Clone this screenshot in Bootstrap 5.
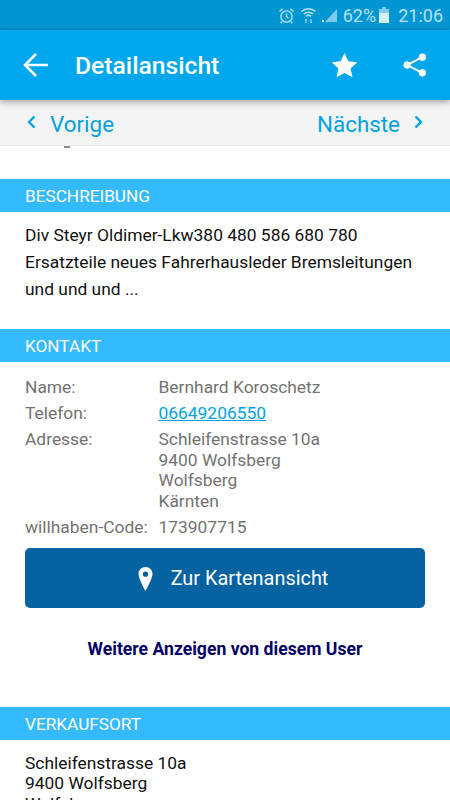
<!DOCTYPE html>
<html lang="de">
<head>
  <meta charset="UTF-8">
  <meta name="viewport" content="width=device-width, initial-scale=1.0">
  <title>Detailansicht</title>
  <link href="https://cdn.jsdelivr.net/npm/bootstrap@5.3.0/dist/css/bootstrap.min.css" rel="stylesheet">
  <style>
    html, body { height: 800px; overflow: hidden; }
    body { font-family: Roboto, "Liberation Sans", sans-serif; background: #fff; color: #111; }
    .status-bar { height: 30px; background: #0095d3; color: #b5e2f6; font-size: 18px; padding-right: 7px; gap: 5px; }
    .battery-icon { margin-left: -2px; }
    .app-bar { height: 70px; background: #00a7ec; color: #fff; padding: 0 23px; position: relative; z-index: 2; box-shadow: 0 2px 7px rgba(0,0,0,.35); }
    .app-title { font-size: 24.7px; font-weight: 500; margin-left: 27px; padding-top: 2px; }
    .star-icon { margin-right: 45px; }
    .pager { height: 46px; background: #f4f4f4; color: #00a2e4; font-size: 22.4px; padding: 5px 27px 0; border-bottom: 1px solid #ececec; }
    .pager svg { margin-top: -5px; }
    .pager-side { gap: 14px; }
    .page-body { height: 654px; overflow: hidden; }
    .cut-text { height: 33px; }
    .cut-mark { width: 6px; height: 2px; margin-left: 64px; background: #8a8a8a; }
    .section-head { height: 33px; background: #33baff; color: #fff; font-size: 17.2px; padding: 0 25px; line-height: 35px; }
    .descr { font-size: 17.4px; line-height: 27px; padding: 10px 25px 26px; margin: 0; }
    .contact { padding: 15px 25px 0; color: #727272; font-size: 17.4px; line-height: 20.5px; }
    .contact-row { display: flex; margin-bottom: 5.7px; }
    .contact-label { width: 133.5px; flex: none; }
    .contact a { color: #00a2e4; }
    .map-btn { height: 60px; background: #0563a2; color: #fff; font-size: 19.9px; border-radius: 5px; margin-top: 10px; padding: 3px 0 0 16px; gap: 18px; width: 100%; border: 0; }
    .more-link { color: #000066; font-size: 17.6px; font-weight: 700; text-align: center; margin-top: 31px; height: 68px; }
    .place { font-size: 17.4px; line-height: 20.5px; padding: 13px 25px 0; margin: 0; }
  </style>
</head>
<body>
  <div class="status-bar d-flex align-items-center justify-content-end">
    <svg width="17" height="17" viewBox="0 0 17 17" fill="none" stroke="#b5e2f6" stroke-width="1.4"><circle cx="8.5" cy="9.5" r="5.6"/><path d="M8.5 6.5v3.2l2 1.2M1.5 4.5l3-2.6M15.5 4.5l-3-2.6M4.2 14.5l-1.5 1.7M12.8 14.5l1.5 1.7"/></svg>
    <svg width="17" height="18" viewBox="0 0 17 18" fill="none" stroke="#b5e2f6" stroke-width="1.5"><path d="M1.5 5.5c4-3.6 10-3.6 14 0M3.8 8c2.7-2.4 6.7-2.4 9.4 0M6 10.4c1.4-1.2 3.6-1.2 5 0"/><path d="M6 17v-4M4.8 14.2 6 13l1.2 1.2M11 13v4M9.8 15.8 11 17l1.2-1.2" stroke-width="1"/></svg>
    <svg width="16" height="16" viewBox="0 0 16 16"><path d="M15 2v13H3z" fill="#7fcbec"/><rect x="0" y="13" width="2" height="2" fill="#e6f6fd"/></svg>
    <span>62%</span>
    <svg class="battery-icon" width="10" height="16" viewBox="0 0 10 16"><path d="M3 0h4v2h3v14H0V2h3z" fill="#7fcbec"/><rect y="6" width="10" height="10" fill="#d5effa"/></svg>
    <span class="ms-1">21:06</span>
  </div>

  <div class="app-bar d-flex align-items-center">
    <svg width="25" height="24" viewBox="0 0 25 24" fill="none" stroke="#fff" stroke-width="2.6"><path d="M25 12H2M13 1 2 12l11 11"/></svg>
    <div class="app-title flex-grow-1">Detailansicht</div>
    <svg class="star-icon" width="27" height="26" viewBox="0 0 24 23" fill="#fff"><path d="M12 .8l3.4 7.4 8 .9-6 5.4 1.7 7.9L12 18.5l-7.1 3.9 1.7-7.9-6-5.4 8-.9z"/></svg>
    <svg width="24" height="26" viewBox="0 0 26 27" fill="#fff" stroke="#fff"><circle cx="21" cy="5" r="3.6"/><circle cx="4.5" cy="13.5" r="3.6"/><circle cx="21" cy="22" r="3.6"/><path d="M21 5 4.5 13.5 21 22" fill="none" stroke-width="2"/></svg>
  </div>

  <div class="pager d-flex align-items-center justify-content-between">
    <div class="pager-side d-flex align-items-center">
      <svg width="9" height="14" viewBox="0 0 9 14" fill="none" stroke="#00a2e4" stroke-width="2.4"><path d="M7.5 1.5 2 7l5.5 5.5"/></svg>
      <span>Vorige</span>
    </div>
    <div class="pager-side d-flex align-items-center">
      <span>Nächste</span>
      <svg width="9" height="14" viewBox="0 0 9 14" fill="none" stroke="#00a2e4" stroke-width="2.4"><path d="M1.5 1.5 7 7l-5.5 5.5"/></svg>
    </div>
  </div>

  <div class="page-body">
    <div class="cut-text"><div class="cut-mark"></div></div>
    <div class="section-head">BESCHREIBUNG</div>
    <p class="descr">Div Steyr Oldimer-Lkw380 480 586 680 780<br>Ersatzteile neues Fahrerhausleder Bremsleitungen und und und ...</p>

    <div class="section-head">KONTAKT</div>
    <div class="contact">
      <div class="contact-row"><div class="contact-label">Name:</div><div>Bernhard Koroschetz</div></div>
      <div class="contact-row"><div class="contact-label">Telefon:</div><div><a href="#">06649206550</a></div></div>
      <div class="contact-row"><div class="contact-label">Adresse:</div><div>Schleifenstrasse 10a<br>9400 Wolfsberg<br>Wolfsberg<br>Kärnten</div></div>
      <div class="contact-row"><div class="contact-label">willhaben-Code:</div><div>173907715</div></div>
      <button type="button" class="map-btn d-flex align-items-center justify-content-center">
        <svg width="15" height="24" viewBox="0 0 15 24"><path fill="#fff" fill-rule="evenodd" d="M7.5 0C3.4 0 .5 3.1.5 7c0 4.7 7 17 7 17s7-12.300 7-17c0-3.900-2.900-7-7-7zm0 4.600a2.600 2.600 0 1 1 0 5.200 2.600 2.600 0 0 1 0-5.200z"/></svg>
        <span>Zur Kartenansicht</span>
      </button>
      <div class="more-link">Weitere Anzeigen von diesem User</div>
    </div>

    <div class="section-head">VERKAUFSORT</div>
    <p class="place">Schleifenstrasse 10a<br>9400 Wolfsberg<br>Wolfsberg<br>Kärnten</p>
  </div>

  <script src="https://cdn.jsdelivr.net/npm/bootstrap@5.3.0/dist/js/bootstrap.bundle.min.js"></script>
</body>
</html>
